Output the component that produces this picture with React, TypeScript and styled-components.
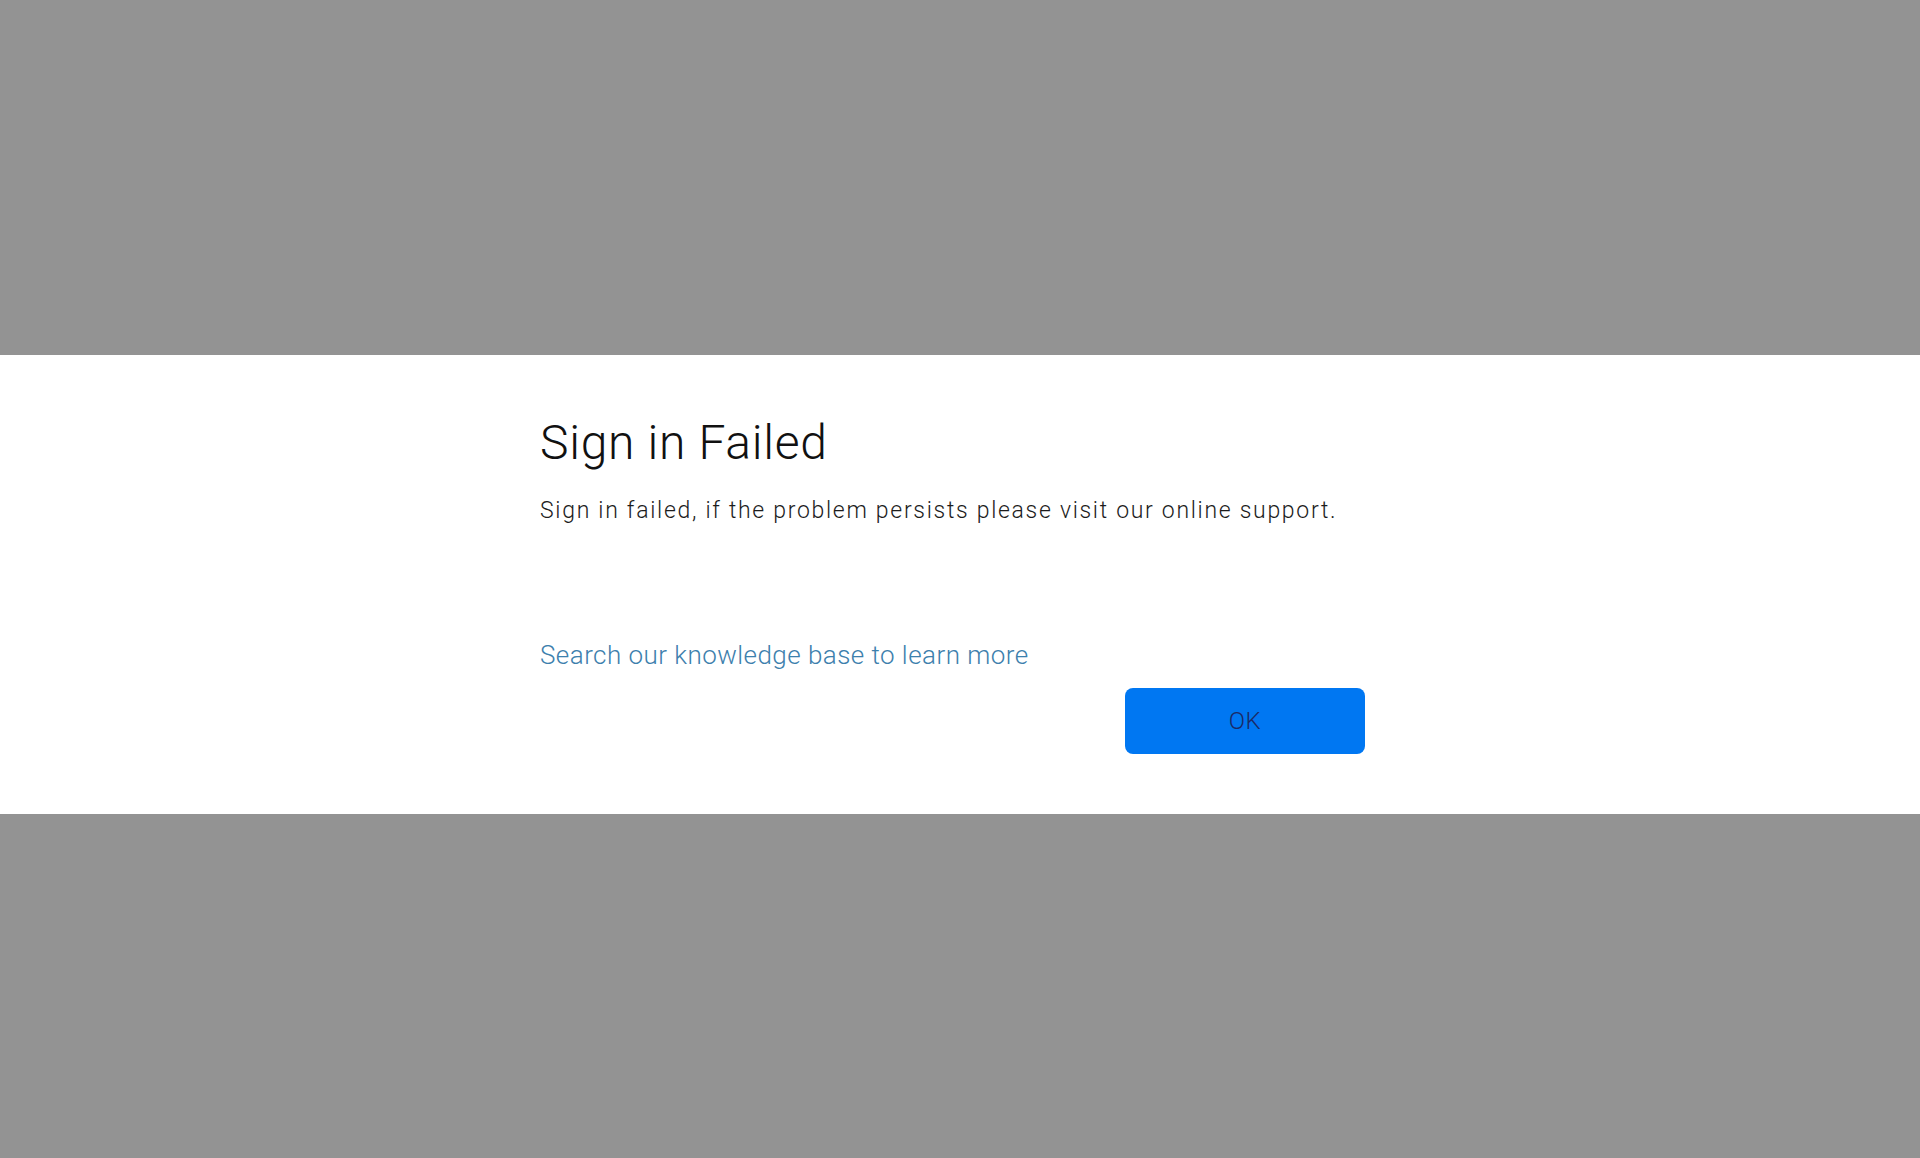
import React from "react";
import styled, { createGlobalStyle } from "styled-components";

const GlobalStyle = createGlobalStyle`
  html, body {
    margin: 0;
    padding: 0;
    height: 100%;
    background: #939393;
    font-family: Roboto, "Liberation Sans", sans-serif;
  }
  #root {
    min-height: 100%;
  }
`;

const Backdrop = styled.div`
  min-height: 1158px;
  display: flex;
  flex-direction: column;
  justify-content: flex-start;
  padding-top: 355px;
  box-sizing: border-box;
`;

const Band = styled.div`
  background: #ffffff;
  padding: 60px 0 60px 0;
`;

const Content = styled.div`
  width: 840px;
  margin: 0 auto;
  display: flex;
  flex-direction: column;
`;

const Title = styled.h1`
  margin: 0;
  font-size: 48px;
  line-height: 56px;
  font-weight: 300;
  letter-spacing: 0.7px;
  color: #111111;
`;

const Message = styled.p`
  margin: 23px 0 0 0;
  font-size: 23px;
  line-height: 33px;
  font-weight: 300;
  letter-spacing: 1.7px;
  color: #1c1c1c;
`;

const HelpLink = styled.a`
  margin-top: 109px;
  font-size: 26px;
  line-height: 39px;
  font-weight: 300;
  letter-spacing: 0.45px;
  color: #3d80ad;
  text-decoration: none;
  align-self: flex-start;
  cursor: pointer;
`;

const Actions = styled.div`
  display: flex;
  justify-content: flex-end;
  margin-top: 13px;
  padding-right: 15px;
`;

const OkButton = styled.button`
  width: 240px;
  height: 66px;
  border: none;
  border-radius: 8px;
  background: #0077f2;
  color: #1b2a66;
  font-family: Roboto, "Liberation Sans", sans-serif;
  font-size: 24px;
  font-weight: 300;
  letter-spacing: 0.5px;
  cursor: pointer;
`;

export default function App() {
  return (
    <>
      <GlobalStyle />
      <Backdrop>
        <Band>
          <Content>
            <Title>Sign in Failed</Title>
            <Message>
              Sign in failed, if the problem persists please visit our online support.
            </Message>
            <HelpLink>Search our knowledge base to learn more</HelpLink>
            <Actions>
              <OkButton>OK</OkButton>
            </Actions>
          </Content>
        </Band>
      </Backdrop>
    </>
  );
}
